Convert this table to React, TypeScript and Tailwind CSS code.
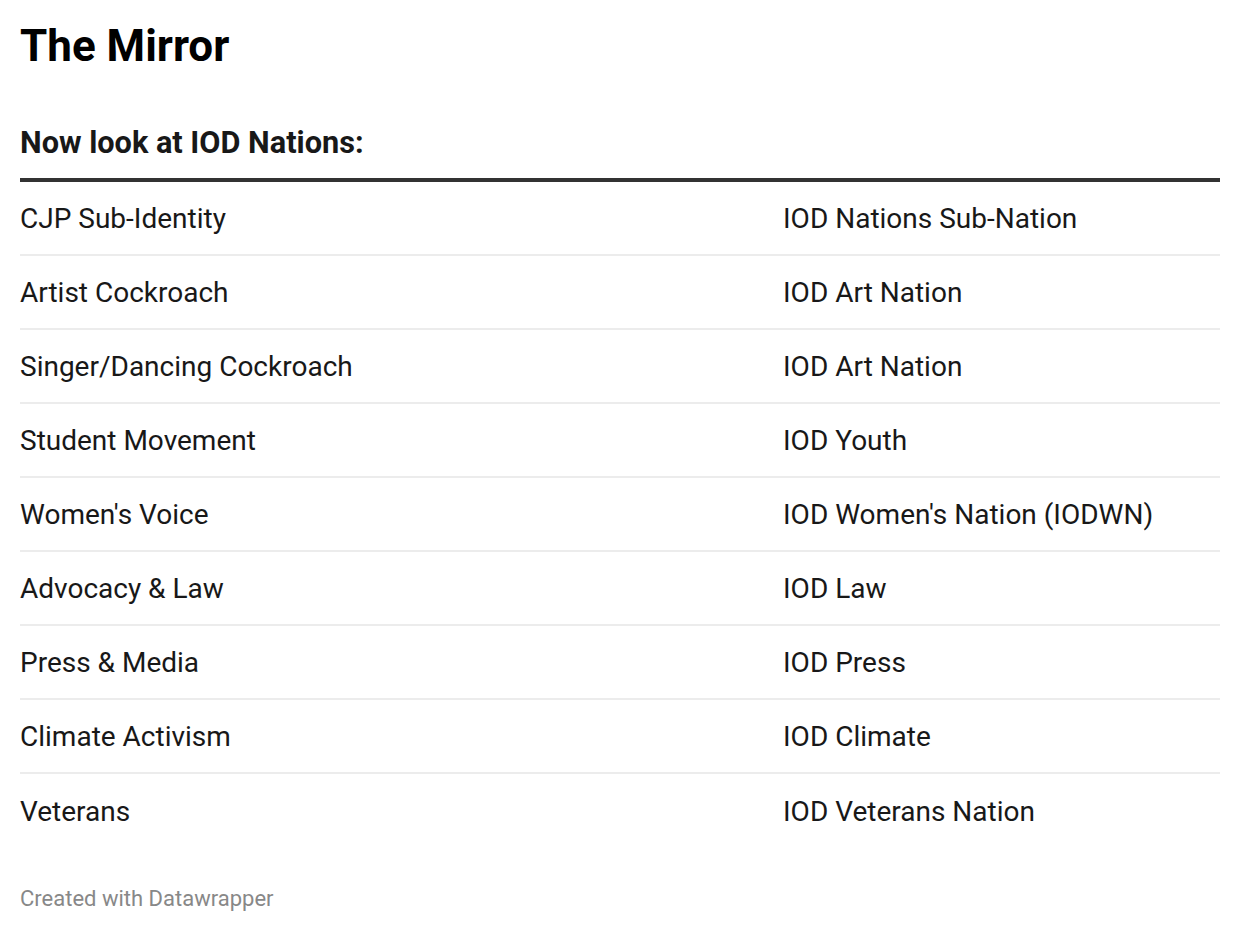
import React from "react";

const rows: [string, string][] = [
  ["CJP Sub-Identity", "IOD Nations Sub-Nation"],
  ["Artist Cockroach", "IOD Art Nation"],
  ["Singer/Dancing Cockroach", "IOD Art Nation"],
  ["Student Movement", "IOD Youth"],
  ["Women's Voice", "IOD Women's Nation (IODWN)"],
  ["Advocacy & Law", "IOD Law"],
  ["Press & Media", "IOD Press"],
  ["Climate Activism", "IOD Climate"],
  ["Veterans", "IOD Veterans Nation"],
];

export default function App() {
  return (
    <div className="w-[1240px] h-[932px] bg-white px-5 pt-[18px] text-[#181818]" style={{ fontFamily: "Roboto, 'Liberation Sans', sans-serif" }}>
      <h1 className="text-[44px] leading-[56px] font-bold text-black">The Mirror</h1>
      <h2 className="mt-[51px] text-[30.7px] leading-[36px] font-bold text-[#181818]">Now look at IOD Nations:</h2>
      <div className="mt-[17px] border-t-4 border-[#333333]">
        {rows.map(([a, b], i) => (
          <div
            key={i}
            className={`grid grid-cols-[763px_1fr] h-[74px] pt-[2px] items-center text-[28px] ${i < rows.length - 1 ? "border-b-2 border-[#ececec]" : ""}`}
          >
            <div>{a}</div>
            <div>{b}</div>
          </div>
        ))}
      </div>
      <div className="mt-[37px] text-[22px] leading-[28px] text-[#888888]">Created with Datawrapper</div>
    </div>
  );
}
